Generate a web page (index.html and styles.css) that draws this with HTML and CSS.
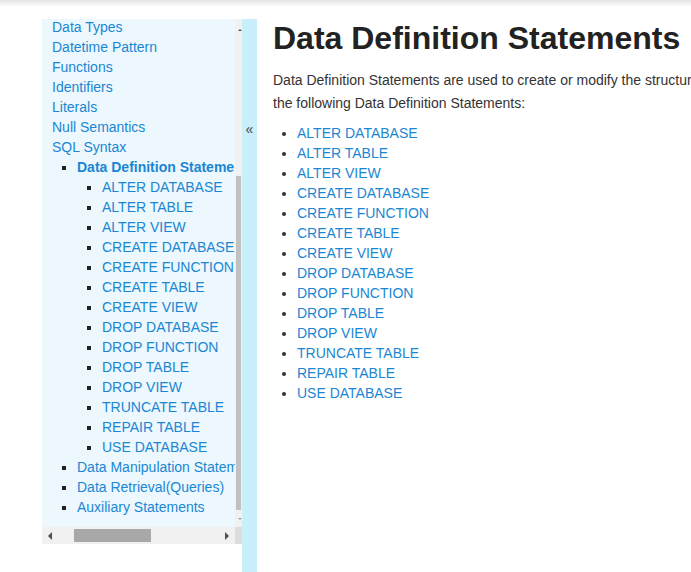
FILE: index.html
```html
<!DOCTYPE html>
<html lang="en">
<head>
<meta charset="utf-8">
<title>Data Definition Statements</title>
<link rel="stylesheet" href="styles.css">
</head>
<body>
<div class="topshade"></div>
<div class="layout">
  <aside class="sidebar">
    <div class="side-view">
      <ul class="nav">
        <li><a href="#">Data Types</a></li>
        <li><a href="#">Datetime Pattern</a></li>
        <li><a href="#">Functions</a></li>
        <li><a href="#">Identifiers</a></li>
        <li><a href="#">Literals</a></li>
        <li><a href="#">Null Semantics</a></li>
        <li><a href="#">SQL Syntax</a>
          <ul class="sub">
            <li><a href="#" class="active">Data Definition Statements</a>
              <ul class="sub">
                <li><a href="#">ALTER DATABASE</a></li>
                <li><a href="#">ALTER TABLE</a></li>
                <li><a href="#">ALTER VIEW</a></li>
                <li><a href="#">CREATE DATABASE</a></li>
                <li><a href="#">CREATE FUNCTION</a></li>
                <li><a href="#">CREATE TABLE</a></li>
                <li><a href="#">CREATE VIEW</a></li>
                <li><a href="#">DROP DATABASE</a></li>
                <li><a href="#">DROP FUNCTION</a></li>
                <li><a href="#">DROP TABLE</a></li>
                <li><a href="#">DROP VIEW</a></li>
                <li><a href="#">TRUNCATE TABLE</a></li>
                <li><a href="#">REPAIR TABLE</a></li>
                <li><a href="#">USE DATABASE</a></li>
              </ul>
            </li>
            <li><a href="#">Data Manipulation Statements</a></li>
            <li><a href="#">Data Retrieval(Queries)</a></li>
            <li><a href="#">Auxiliary Statements</a></li>
          </ul>
        </li>
      </ul>
    </div>
    <div class="vbar">
      <div class="vbtn"><span class="tri-up"></span></div>
      <div class="vtrack"><div class="vthumb"></div></div>
      <div class="vbtn"><span class="tri-down"></span></div>
    </div>
    <div class="hbar">
      <div class="hbtn"><span class="tri-left"></span></div>
      <div class="htrack"><div class="hthumb"></div></div>
      <div class="hbtn"><span class="tri-right"></span></div>
    </div>
    <div class="corner"></div>
  </aside>
  <div class="toggle">&laquo;</div>
  <main class="content">
    <h1>Data Definition Statements</h1>
    <p>Data Definition Statements are used to create or modify the structure of database objects in a database. Spark SQL supports the following Data Definition Statements:</p>
    <ul class="links">
      <li><a href="#">ALTER DATABASE</a></li>
      <li><a href="#">ALTER TABLE</a></li>
      <li><a href="#">ALTER VIEW</a></li>
      <li><a href="#">CREATE DATABASE</a></li>
      <li><a href="#">CREATE FUNCTION</a></li>
      <li><a href="#">CREATE TABLE</a></li>
      <li><a href="#">CREATE VIEW</a></li>
      <li><a href="#">DROP DATABASE</a></li>
      <li><a href="#">DROP FUNCTION</a></li>
      <li><a href="#">DROP TABLE</a></li>
      <li><a href="#">DROP VIEW</a></li>
      <li><a href="#">TRUNCATE TABLE</a></li>
      <li><a href="#">REPAIR TABLE</a></li>
      <li><a href="#">USE DATABASE</a></li>
    </ul>
  </main>
</div>
</body>
</html>
```

FILE: styles.css
```css
html, body {
  margin: 0;
  padding: 0;
  overflow: hidden;
  background: #ffffff;
  font-family: "Liberation Sans", Arial, sans-serif;
  font-size: 14px;
  color: #333333;
}

a {
  color: #1b86d3;
  text-decoration: none;
}

.topshade {
  position: fixed;
  top: 0;
  left: 0;
  right: 0;
  height: 7px;
  background: linear-gradient(#e4e4e4, rgba(255, 255, 255, 0));
}

.layout {
  display: flex;
  align-items: flex-start;
  padding-top: 19px;
  min-height: 553px;
}

/* sidebar */
.sidebar {
  margin-left: 42px;
  flex-shrink: 0;
  display: grid;
  grid-template-columns: 193px 7px;
  grid-template-rows: 508px 17px;
}

.side-view {
  background: #ecf8fd;
  overflow: hidden;
}

.nav {
  list-style: none;
  margin: -2px 0 0 0;
  padding: 0 0 0 10px;
  line-height: 20px;
  white-space: nowrap;
}

.nav .sub {
  list-style: square;
  margin: 0;
  padding-left: 25px;
}

.nav li::marker {
  color: #222222;
  font-size: 13px;
}

.nav .active {
  font-weight: bold;
}

.vbar {
  background: #f1f1f1;
  display: flex;
  flex-direction: column;
}

.vbtn {
  height: 17px;
  display: flex;
  align-items: center;
  justify-content: center;
}

.vbtn:first-child {
  height: 20px;
  align-items: flex-end;
  padding-bottom: 8px;
  box-sizing: border-box;
}

.vtrack {
  flex: 1;
  display: flex;
  flex-direction: column;
}

.vthumb {
  margin-top: auto;
  margin-left: 1px;
  width: 5px;
  height: 334px;
  background: #c1c1c1;
}

.tri-up {
  width: 0;
  height: 0;
  border-left: 2px solid transparent;
  border-right: 2px solid transparent;
  border-bottom: 2px solid #505050;
  margin-left: 2px;
}

.tri-down {
  width: 0;
  height: 0;
  border-left: 2px solid transparent;
  border-right: 2px solid transparent;
  border-top: 2px solid #a0a0a0;
  margin-left: 2px;
}

.hbar {
  background: #f1f1f1;
  display: flex;
  align-items: stretch;
}

.hbtn {
  width: 16px;
  display: flex;
  align-items: center;
  justify-content: center;
}

.htrack {
  flex: 1;
  display: flex;
  align-items: center;
}

.hthumb {
  width: 77px;
  height: 13px;
  margin-left: 16px;
  background: #a8a8a8;
}

.tri-left {
  width: 0;
  height: 0;
  border-top: 4px solid transparent;
  border-bottom: 4px solid transparent;
  border-right: 4px solid #505050;
}

.tri-right {
  width: 0;
  height: 0;
  border-top: 4px solid transparent;
  border-bottom: 4px solid transparent;
  border-left: 4px solid #505050;
}

.corner {
  background: #dcdcdc;
}

/* toggle strip */
.toggle {
  flex-shrink: 0;
  align-self: stretch;
  width: 15px;
  background: #c9effd;
  color: #444444;
  font-size: 14px;
  text-align: center;
  padding-top: 102px;
  box-sizing: border-box;
}

/* content */
.content {
  flex-shrink: 0;
  width: 790px;
  margin-left: 16px;
}

.content h1 {
  margin: 0;
  font-size: 32px;
  line-height: 38px;
  font-weight: bold;
  color: #222222;
}

.content p {
  margin: 12px 0 0 0;
  line-height: 23px;
  color: #333333;
}

.links {
  margin: 8px 0 0 0;
  padding-left: 24px;
  line-height: 20px;
}

.links li::marker {
  color: #333333;
}
```
